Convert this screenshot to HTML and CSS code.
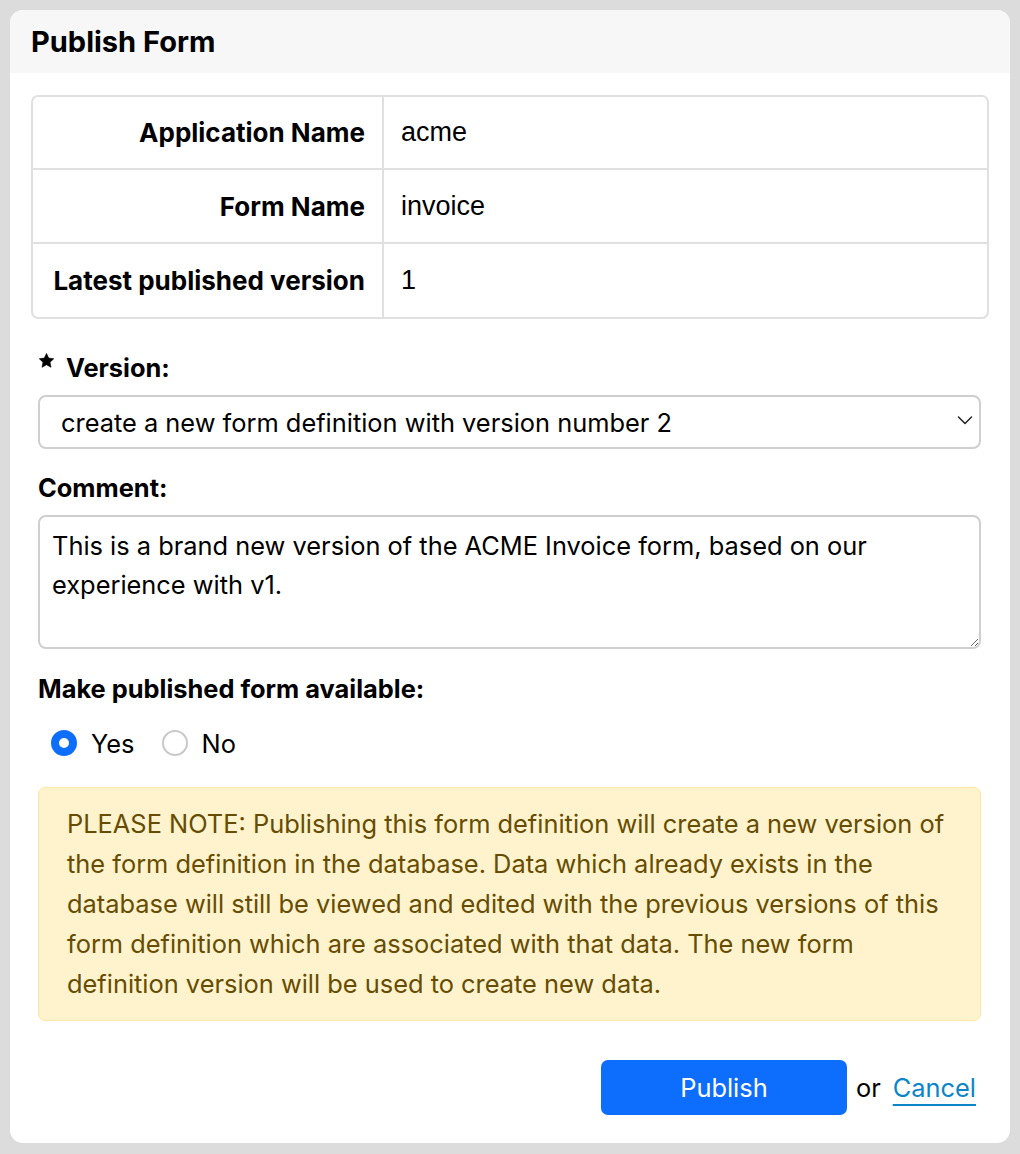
FILE: index.html
```html
<!DOCTYPE html>
<html lang="en">
<head>
<meta charset="utf-8">
<title>Publish Form</title>
<link rel="stylesheet" href="styles.css">
</head>
<body>
<div class="card">
  <div class="card-header">Publish Form</div>
  <div class="card-body">
    <div class="info">
      <table class="info-table">
        <tr><th>Application Name</th><td>acme</td></tr>
        <tr><th>Form Name</th><td>invoice</td></tr>
        <tr><th>Latest published version</th><td>1</td></tr>
      </table>
    </div>

    <div class="field field-version">
      <label class="label"><svg class="star" viewBox="0 0 20 20" width="15" height="15"><path d="M10 0.6l2.9 6.2 6.8 0.8-5 4.7 1.3 6.8L10 15.7l-6 3.4 1.3-6.8-5-4.7 6.8-0.8z" fill="#000" stroke="#000" stroke-width="0.8" stroke-linejoin="round"/></svg>Version:</label>
      <div class="select-wrap">
        <select class="select">
          <option>create a new form definition with version number 2</option>
        </select>
        <svg class="chevron" viewBox="0 0 16 16" width="16" height="16"><path d="M1.5 5l6.5 6.5 6.5-6.5" fill="none" stroke="#222" stroke-width="1.5" stroke-linecap="round" stroke-linejoin="round"/></svg>
      </div>
    </div>

    <div class="field field-comment">
      <label class="label">Comment:</label>
      <textarea class="textarea">This is a brand new version of the ACME Invoice form, based on our experience with v1.</textarea>
    </div>

    <div class="field field-available">
      <label class="label">Make published form available:</label>
      <div class="radios">
        <label class="radio"><input type="radio" name="avail" checked><span>Yes</span></label>
        <label class="radio"><input type="radio" name="avail"><span>No</span></label>
      </div>
    </div>

    <div class="note">PLEASE NOTE: Publishing this form definition will create a new version of the form definition in the database. Data which already exists in the database will still be viewed and edited with the previous versions of this form definition which are associated with that data. The new form definition version will be used to create new data.</div>

    <div class="actions">
      <button class="btn-primary" type="button">Publish</button>
      <span class="or">or</span>
      <a class="cancel" href="#">Cancel</a>
    </div>
  </div>
</div>
</body>
</html>
```

FILE: styles.css
```css
* { box-sizing: border-box; }

html, body {
  margin: 0;
  padding: 0;
  background: #dcdcdc;
}

body {
  font-family: Inter, "Noto Sans", "Liberation Sans", sans-serif;
  color: #111;
  font-size: 25.4px;
  padding: 10px;
}

.card {
  width: 1000px;
  height: 1133px;
  background: #fff;
  border-radius: 13px;
  overflow: hidden;
}

.card-header {
  height: 63px;
  background: #f7f7f7;
  padding: 0 21px;
  display: flex;
  align-items: center;
  font-size: 29px;
  font-weight: 700;
  color: #000;
}

.card-body {
  padding: 22px 21px 0 21px;
}

.info {
  border: 2px solid #e0e0e0;
  border-radius: 7px;
  overflow: hidden;
}

.info-table {
  width: 100%;
  border-collapse: collapse;
  table-layout: fixed;
}

.info-table th,
.info-table td {
  height: 74px;
  padding: 0 17px;
  border-top: 2px solid #e0e0e0;
  vertical-align: middle;
}

.info-table tr:first-child th,
.info-table tr:first-child td {
  border-top: none;
  height: 72px;
}

.info-table th {
  width: 350px;
  text-align: right;
  font-weight: 700;
  font-size: 26px;
  border-right: 2px solid #e0e0e0;
  color: #000;
  white-space: nowrap;
}

.info-table td {
  font-family: "Liberation Sans", Arial, sans-serif;
  font-size: 27px;
  color: #000;
}

.field {
  padding: 0 8px 0 7px;
}

.label {
  display: flex;
  align-items: center;
  height: 30px;
  font-weight: 700;
  color: #000;
  margin-bottom: 13px;
}

.field-version { margin-top: 33px; }
.field-comment { margin-top: 23px; }
.field-available { margin-top: 24px; }

.star {
  align-self: flex-start;
  margin: 1px 12px 0 1px;
}

.select-wrap {
  position: relative;
}

.select {
  appearance: none;
  -webkit-appearance: none;
  width: 100%;
  height: 54px;
  border: 2px solid #cfcfcf;
  border-radius: 8px;
  background: #fff;
  font-family: inherit;
  font-size: 25.4px;
  color: #000;
  padding: 0 40px 0 21px;
  outline: none;
}

.chevron {
  position: absolute;
  right: 8px;
  top: 17px;
  pointer-events: none;
}

.textarea {
  display: block;
  width: 100%;
  height: 134px;
  border: 2px solid #cfcfcf;
  border-radius: 8px;
  font-family: inherit;
  font-size: 25.4px;
  line-height: 39px;
  color: #000;
  padding: 9px 12px;
  resize: vertical;
  outline: none;
}

.radios {
  display: flex;
  align-items: center;
  gap: 27px;
  height: 40px;
  margin-top: 20px;
  padding-left: 13px;
}

.radio {
  display: flex;
  align-items: center;
  gap: 14px;
  color: #000;
}

.radio input {
  appearance: none;
  -webkit-appearance: none;
  margin: 0;
  width: 26px;
  height: 26px;
  border-radius: 50%;
  border: 2px solid #c8c8c8;
  background: #fff;
}

.radio input:checked {
  border: 8px solid #0d6efd;
  background: #fff;
}

.note {
  margin: 24px 8px 0 7px;
  background: #fff3cd;
  border: 1px solid #ffe7a3;
  border-radius: 7px;
  color: #664d03;
  padding: 16px 20px 16px 28px;
  line-height: 40px;
  font-size: 25.4px;
}

.actions {
  display: flex;
  align-items: center;
  justify-content: flex-end;
  margin-top: 39px;
  padding-right: 13px;
}

.btn-primary {
  width: 246px;
  height: 55px;
  background: #0d6efd;
  color: #fff;
  border: none;
  border-radius: 7px;
  font-family: inherit;
  font-size: 25.4px;
}

.or {
  margin-left: 9px;
  margin-right: 12px;
  color: #000;
}

.cancel {
  color: #0a85c9;
  text-decoration: underline;
  text-underline-offset: 7px;
  text-decoration-thickness: 1.5px;
}
```
